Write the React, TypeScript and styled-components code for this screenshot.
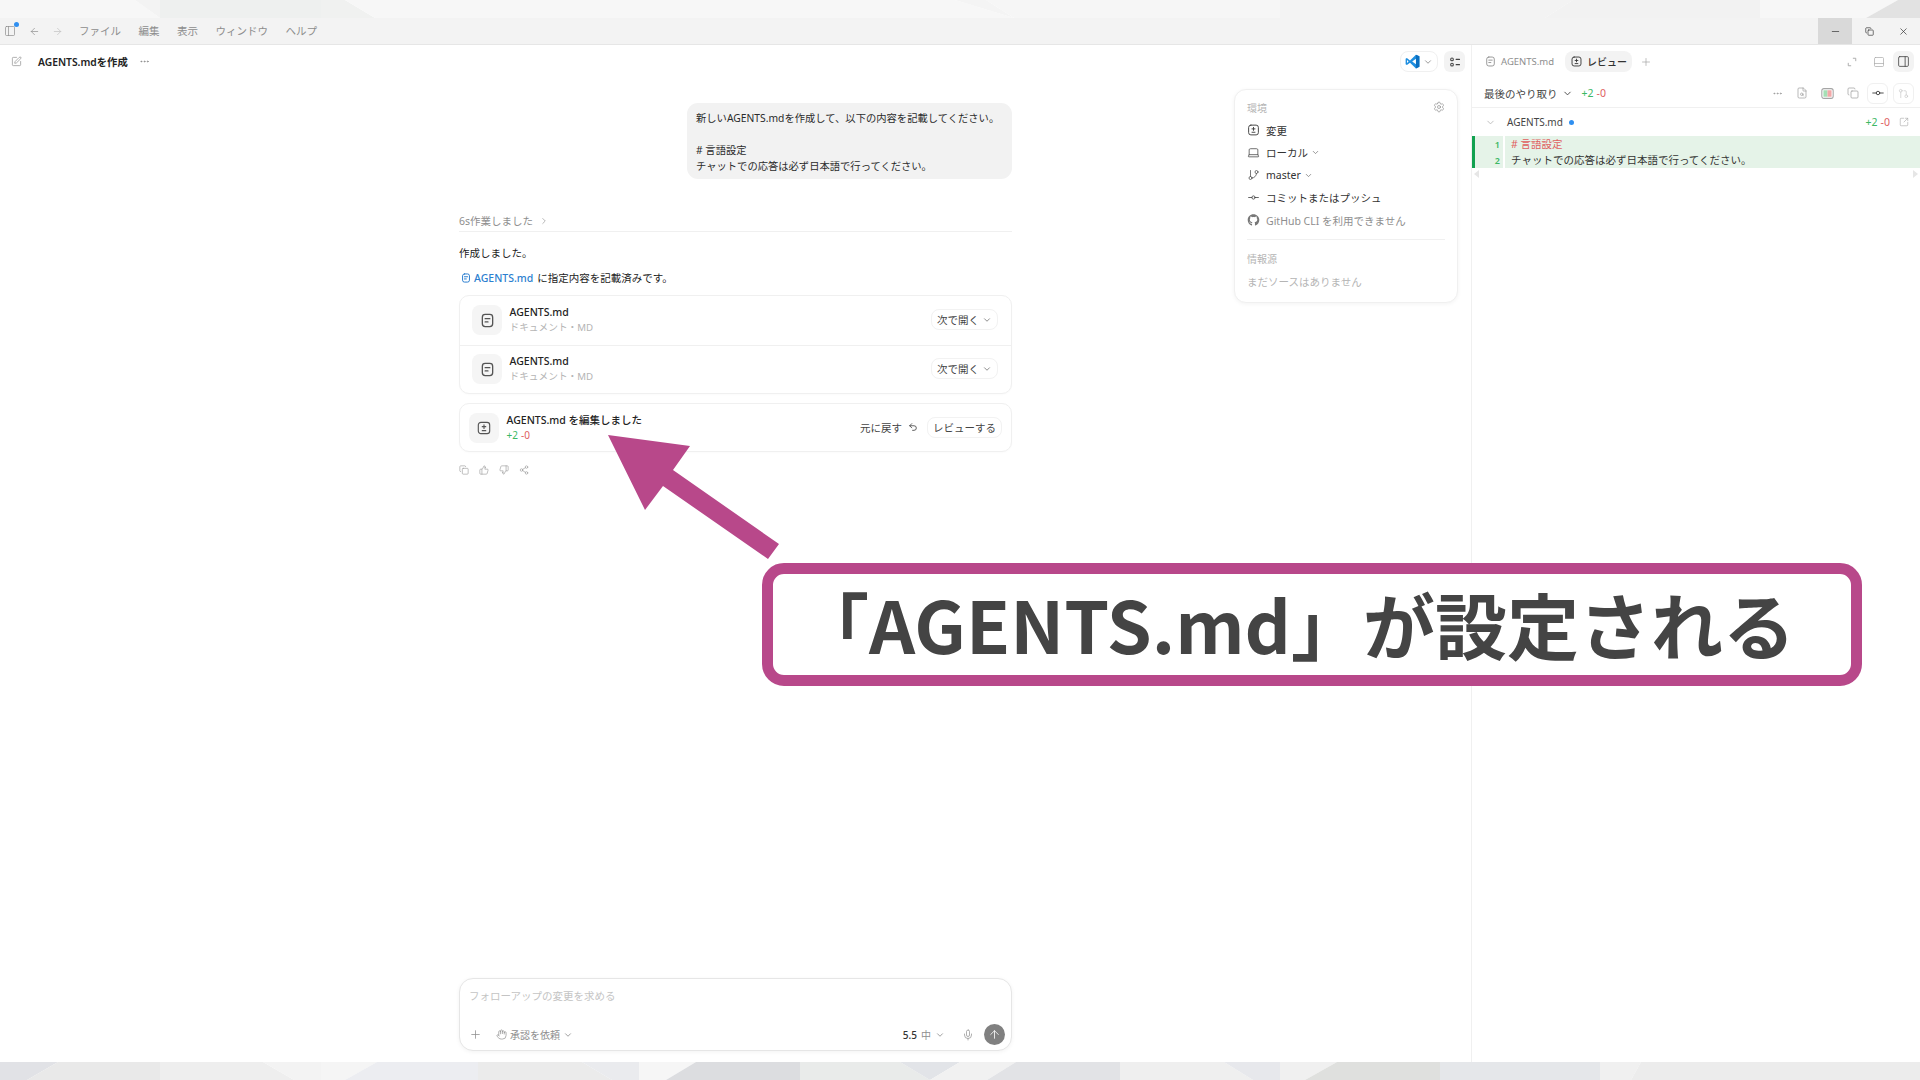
import React from "react";
import styled, { createGlobalStyle } from "styled-components";
import {
    ArrowLeft,
    ArrowRight,
    ArrowUp,
    ChevronDown,
    ChevronRight,
    Copy,
    Ellipsis,
    FileSearch,
    GitBranch,
    GitCommitHorizontal,
    GitPullRequest,
    Hand,
    Laptop,
    Mic,
    Minus,
    PanelBottom,
    PanelLeft,
    PanelRight,
    Plus,
    Settings,
    Share2,
    SquareArrowOutUpRight,
    SquarePen,
    ThumbsDown,
    ThumbsUp,
    Undo2,
    X,
} from "lucide-react";
import { FaGithub } from "react-icons/fa";

const colors = {
    text: "#2f2f2f",
    muted: "#8e8e8e",
    faint: "#b5b5b5",
    line: "#f0f0f0",
    chip: "#f3f3f3",
    green: "#3db864",
    red: "#e0605f",
    accent: "#b8488a",
};

const GlobalStyle = createGlobalStyle`
    html, body {
        margin: 0;
        padding: 0;
        background: #ffffff;
    }
    body {
        font-family: "Noto Sans", "Noto Sans CJK JP", sans-serif;
        font-size: 10.5px;
        color: ${colors.text};
    }
    * {
        box-sizing: border-box;
    }
`;

const Page = styled.div`
    position: relative;
    width: 1920px;
    height: 1080px;
    overflow: hidden;
    display: flex;
    flex-direction: column;
`;

const StripSvg = styled.svg`
    display: block;
    width: 1920px;
    height: 18px;
    flex: none;
`;

const TitleBar = styled.div`
    height: 27px;
    flex: none;
    display: flex;
    align-items: center;
    background: #f3f3f3;
    border-bottom: 1px solid #e6e6e6;
    color: #8d8d8d;
`;

const SidebarToggle = styled.span`
    position: relative;
    display: flex;
    margin-left: 4px;
    width: 13px;
`;

const NoticeDot = styled.span`
    position: absolute;
    top: -3px;
    right: -2px;
    width: 5px;
    height: 5px;
    border-radius: 50%;
    background: #2f8ff0;
`;

const NavArrows = styled.div`
    display: flex;
    gap: 12px;
    margin-left: 12px;
    margin-right: 16px;
`;

const MenuItem = styled.span`
    font-size: 10.5px;
    margin-right: 17.5px;
    line-height: 1;
`;

const WindowControls = styled.div`
    margin-left: auto;
    display: flex;
    height: 100%;
    color: #333;
`;

const WindowButton = styled.span<{ $active?: boolean }>`
    width: 34px;
    display: flex;
    align-items: center;
    justify-content: center;
    background: ${(p) => (p.$active ? "#d9d9d9" : "transparent")};
`;

const Main = styled.div`
    flex: 1;
    min-height: 0;
    display: flex;
    background: #ffffff;
`;

const ChatPane = styled.div`
    width: 1472px;
    flex: none;
    display: flex;
    flex-direction: column;
    border-right: 1px solid ${colors.line};
`;

const ChatHeader = styled.div`
    height: 33px;
    flex: none;
    display: flex;
    align-items: center;
    padding: 0 6px 0 11px;
    color: #8d8d8d;
`;

const ChatTitle = styled.span`
    margin-left: 16px;
    font-size: 10.3px;
    font-weight: 600;
    color: #222;
`;

const TitleMenu = styled.span`
    display: flex;
    margin-left: 11px;
`;

const HeaderRight = styled.div`
    margin-left: auto;
    display: flex;
    align-items: center;
    gap: 6px;
`;

const EditorPicker = styled.div`
    width: 38px;
    height: 21px;
    display: flex;
    align-items: center;
    justify-content: center;
    gap: 3px;
    border: 1px solid ${colors.line};
    border-radius: 8px;
    color: #888;
`;

const IconChip = styled.div<{ $outlined?: boolean }>`
    width: 21px;
    height: 21px;
    display: flex;
    align-items: center;
    justify-content: center;
    border-radius: 6px;
    background: ${(p) => (p.$outlined ? "#fff" : colors.chip)};
    border: ${(p) => (p.$outlined ? `1px solid ${colors.line}` : "none")};
    color: #444;
`;

const ChatBody = styled.div`
    flex: 1;
    min-height: 0;
    display: grid;
    grid-template-columns: 459px 553px 1fr;
`;

const ChatColumn = styled.div`
    grid-column: 2;
    display: flex;
    flex-direction: column;
    padding-bottom: 11px;
`;

const Bubble = styled.div`
    align-self: flex-end;
    width: 325px;
    margin-top: 25px;
    padding: 7px 0 5px 9px;
    background: #f2f2f2;
    border-radius: 11px;
    font-size: 10.3px;
    line-height: 16px;
    color: #2b2b2b;
    white-space: pre;
`;

const WorkRow = styled.div`
    margin-top: 33px;
    height: 20px;
    display: flex;
    align-items: center;
    gap: 6px;
    padding-bottom: 2px;
    color: ${colors.muted};
    border-bottom: 1px solid ${colors.line};
`;

const Paragraph = styled.p<{ $top: number }>`
    margin: ${(p) => p.$top}px 0 0;
    line-height: 16px;
    color: #222;
    display: flex;
    align-items: center;
`;

const FileLink = styled.span`
    display: inline-flex;
    align-items: center;
    gap: 3px;
    margin-right: 4px;
    margin-left: 2px;
    color: #2c7fd0;
    font-weight: 500;
`;

const Card = styled.div<{ $top: number }>`
    margin-top: ${(p) => p.$top}px;
    border: 1px solid ${colors.line};
    border-radius: 10px;
    background: #fff;
    box-shadow: 0 1px 2px rgba(0, 0, 0, 0.02);
`;

const FileRow = styled.div`
    height: 48.5px;
    display: flex;
    align-items: center;
    padding: 0 13px 0 12px;

    & + & {
        border-top: 1px solid ${colors.line};
    }
`;

const EditRow = styled(FileRow)`
    height: 47px;
    padding: 0 9px 0 9px;
`;

const IconBox = styled.div`
    width: 30px;
    height: 30px;
    flex: none;
    display: flex;
    align-items: center;
    justify-content: center;
    border-radius: 8px;
    background: #f5f5f5;
    color: #555;
`;

const RowText = styled.div`
    margin-left: 7.5px;
    display: flex;
    flex-direction: column;
    line-height: 15px;
`;

const RowTitle = styled.span`
    font-weight: 500;
    color: #222;
`;

const RowSub = styled.span`
    font-size: 9.7px;
    color: ${colors.faint};
`;

const RowActions = styled.div`
    margin-left: auto;
    padding-bottom: 1px;
    display: flex;
    align-items: center;
    gap: 9px;
`;

const GhostButton = styled.span`
    height: 21px;
    display: inline-flex;
    align-items: center;
    gap: 3px;
    padding: 0 5px;
    border: 1px solid #f2f2f2;
    border-radius: 8px;
    color: #444;
    background: #fff;
`;

const UndoLabel = styled.span`
    display: inline-flex;
    align-items: center;
    gap: 6px;
    color: #444;
`;

const Stat = styled.span<{ $small?: boolean }>`
    display: inline-flex;
    gap: 3px;
    font-size: ${(p) => (p.$small ? "10px" : "10.5px")};
    line-height: 15px;
    color: ${colors.green};

    & > span {
        color: ${colors.red};
    }
`;

const Reactions = styled.div`
    margin-top: 10px;
    height: 16px;
    display: flex;
    align-items: center;
    gap: 10px;
    color: #9a9a9a;
`;

const Composer = styled.div`
    margin-top: auto;
    height: 73px;
    display: flex;
    flex-direction: column;
    justify-content: space-between;
    padding: 9px 6px 5px 9px;
    border: 1px solid #e6e6e6;
    border-radius: 14px;
    background: #fff;
    box-shadow: 0 1px 4px rgba(0, 0, 0, 0.05);
`;

const Placeholder = styled.span`
    line-height: 16px;
    color: #c4c4c4;
`;

const ComposerBar = styled.div`
    display: flex;
    align-items: center;
    color: ${colors.muted};
`;

const ApprovalPicker = styled.span`
    margin-left: 14px;
    display: inline-flex;
    align-items: center;
    gap: 3px;
    font-size: 10px;
`;

const ModelPicker = styled.span`
    margin-left: auto;
    display: inline-flex;
    align-items: center;
    gap: 4px;
    font-size: 10px;
`;

const ModelName = styled.span`
    color: #333;
    font-weight: 500;
`;

const MicSlot = styled.span`
    display: flex;
    margin: 0 10px 0 17px;
`;

const SendButton = styled.span`
    width: 21px;
    height: 21px;
    border-radius: 50%;
    display: flex;
    align-items: center;
    justify-content: center;
    background: #808080;
    color: #fff;
`;

const EnvCard = styled.aside`
    grid-column: 3;
    justify-self: end;
    align-self: start;
    width: 224px;
    height: 214px;
    margin: 11px 13px 0 0;
    padding: 9px 12px 0;
    border: 1px solid ${colors.line};
    border-radius: 12px;
    background: #fff;
    box-shadow: 0 1px 4px rgba(0, 0, 0, 0.05);
`;

const EnvHead = styled.div`
    height: 16px;
    display: flex;
    align-items: center;
    justify-content: space-between;
    font-size: 10px;
    color: ${colors.faint};
`;

const EnvList = styled.div`
    margin-top: 4px;
    display: flex;
    flex-direction: column;
`;

const EnvRow = styled.div<{ $muted?: boolean }>`
    height: 22.5px;
    display: flex;
    align-items: center;
    gap: 7px;
    color: ${(p) => (p.$muted ? colors.muted : "#333")};

    & > svg:first-child {
        flex: none;
        width: 13px;
        margin-left: -0.5px;
        margin-right: -0.5px;
        color: ${(p) => (p.$muted ? "#777" : "#444")};
    }

    & > svg:last-child:not(:first-child) {
        margin-left: -4px;
    }
`;

const EnvDivider = styled.div`
    margin: 7px 0 11px;
    border-top: 1px solid ${colors.line};
`;

const EnvEmpty = styled.div`
    margin-top: 7px;
    line-height: 16px;
    color: ${colors.faint};
`;

const ReviewPane = styled.div`
    flex: 1;
    min-width: 0;
    display: flex;
    flex-direction: column;
`;

const TabBar = styled.div`
    height: 33px;
    flex: none;
    display: flex;
    align-items: center;
    padding: 0 6px 0 13px;
`;

const Tab = styled.span<{ $active?: boolean }>`
    height: 21px;
    display: inline-flex;
    align-items: center;
    gap: 5px;
    padding: ${(p) => (p.$active ? "0 5px 0 6px" : "0")};
    margin-left: ${(p) => (p.$active ? "11px" : "0")};
    border-radius: 8px;
    background: ${(p) => (p.$active ? colors.chip : "transparent")};
    color: ${(p) => (p.$active ? "#333" : colors.muted)};
    font-size: ${(p) => (p.$active ? "10px" : "9.5px")};
    font-weight: ${(p) => (p.$active ? 500 : 400)};
`;

const AddTab = styled.span`
    display: flex;
    margin-left: 8px;
    color: #a5a5a5;
`;

const TabTools = styled.div`
    margin-left: auto;
    display: flex;
    align-items: center;
    gap: 8px;
    color: #a9a9a9;
`;

const ExpandSlot = styled.span`
    display: flex;
    margin-right: 8px;
`;

const ReviewBar = styled.div`
    height: 30px;
    flex: none;
    display: flex;
    align-items: center;
    padding: 1px 6px 0 12px;
    border-bottom: 1px solid ${colors.line};
`;

const ScopePicker = styled.span`
    display: inline-flex;
    align-items: center;
    gap: 4px;
    margin-right: 9px;
    color: #444;
`;

const ReviewTools = styled.div`
    margin-left: auto;
    display: flex;
    align-items: center;
    gap: 13px;
    color: #9c9c9c;
`;

const ChipGroup = styled.div`
    display: flex;
    gap: 5px;
    margin-left: -5px;
`;

const FileHead = styled.div`
    height: 28px;
    flex: none;
    display: flex;
    align-items: center;
    padding: 0 11px 0 13px;
    color: #bbb;
`;

const FileName = styled.span`
    margin-left: 11px;
    font-size: 10px;
    color: #444;
`;

const ChangedDot = styled.span`
    width: 5px;
    height: 5px;
    margin-left: 6px;
    border-radius: 50%;
    background: #2f8ff0;
`;

const FileStats = styled.div`
    margin-left: auto;
    display: flex;
    align-items: center;
    gap: 9px;
`;

const DiffBlock = styled.div`
    flex: none;
    border-left: 3px solid #12a150;
`;

const DiffLine = styled.div`
    height: 16px;
    display: flex;
    align-items: center;
    background: #e5f3e8;
`;

const LineNumber = styled.span`
    width: 30px;
    height: 100%;
    padding-right: 3px;
    display: flex;
    align-items: center;
    justify-content: flex-end;
    border-right: 2px solid #fff;
    color: ${colors.green};
    font-size: 9px;
    font-weight: 600;
`;

const LineCode = styled.span<{ $heading?: boolean }>`
    margin-left: 6px;
    padding-bottom: 2px;
    color: ${(p) => (p.$heading ? colors.red : "#333")};
`;

const ScrollTrack = styled.div`
    height: 12px;
    flex: none;
    display: flex;
    align-items: center;
    justify-content: space-between;
    padding: 0 2px;
`;

const ScrollArrow = styled.span<{ $right?: boolean }>`
    width: 0;
    height: 0;
    border-top: 4px solid transparent;
    border-bottom: 4px solid transparent;
    border-${(p) => (p.$right ? "left" : "right")}: 5px solid #e6e6e6;
`;

const Callout = styled.div`
    position: absolute;
    left: 762px;
    top: 563px;
    width: 1100px;
    height: 123px;
    display: flex;
    align-items: center;
    justify-content: center;
    padding: 0 32px 4px 0;
    border: 11px solid ${colors.accent};
    border-radius: 22px;
    background: #fff;
    color: #444;
    font-family: "Noto Sans CJK JP", sans-serif;
    font-size: 72px;
    font-weight: 700;
    white-space: nowrap;
`;

const ArrowSvg = styled.svg`
    position: absolute;
    left: 600px;
    top: 430px;
    width: 190px;
    height: 135px;
`;

// wallpaper slices along the top and bottom edges, in screen px
const bottomSlices: [number, number, number, number, string][] = [
    [0, 58, 27, 0, "#e1e2e6"],
    [58, 160, 160, 27, "#e9e9e9"],
    [160, 263, 294, 160, "#eeeeee"],
    [263, 321, 321, 294, "#f3f3f3"],
    [321, 377, 345, 321, "#f5f5f5"],
    [377, 478, 478, 345, "#ecedf1"],
    [478, 582, 612, 478, "#ebebeb"],
    [582, 639, 639, 612, "#eaebee"],
    [639, 696, 666, 639, "#f6f6f6"],
    [696, 800, 800, 666, "#dcdde0"],
    [800, 900, 930, 800, "#e9ebea"],
    [900, 960, 930, 930, "#e2e4e8"],
    [960, 1016, 987, 930, "#f1f1f1"],
    [1016, 1120, 1120, 987, "#e2e3e6"],
    [1120, 1224, 1253, 1120, "#efefef"],
    [1224, 1280, 1280, 1253, "#e7e8ec"],
    [1280, 1337, 1305, 1280, "#f0f0f0"],
    [1337, 1440, 1440, 1305, "#dfe0de"],
    [1440, 1600, 1600, 1440, "#e5e7ea"],
    [1600, 1641, 1631, 1600, "#f0f0f0"],
    [1641, 1920, 1920, 1631, "#ececec"],
];

const topSlices: [number, number, number, number, string][] = [
    [0, 135, 160, 0, "#f7f7f7"],
    [135, 160, 160, 160, "#f3f3f3"],
    [160, 321, 321, 160, "#eef0ef"],
    [321, 345, 375, 321, "#f0f1f0"],
    [345, 955, 1014, 375, "#f7f7f7"],
    [955, 986, 1014, 1014, "#f4f4f4"],
    [986, 1280, 1280, 1014, "#f6f6f6"],
    [1280, 1573, 1545, 1280, "#f3f3f3"],
    [1573, 1760, 1760, 1545, "#f2f2f2"],
    [1760, 1898, 1866, 1760, "#f7f7f7"],
    [1898, 1920, 1920, 1866, "#e2e2e2"],
];

function Wallpaper({ slices }: { slices: [number, number, number, number, string][] }) {
    return (
        <StripSvg viewBox="0 0 1920 18" preserveAspectRatio="none">
            {slices.map(([a, b, c, d, fill]) => (
                <polygon key={`${a}-${b}`} points={`${a},0 ${b},0 ${c},18 ${d},18`} fill={fill} />
            ))}
        </StripSvg>
    );
}

function VscodeLogo() {
    return (
        <svg width="15" height="15" viewBox="0 0 24 24">
            <path d="M17.5 1 23 3.7v16.6L17.5 23 8 13.8l-5 3.9L1 16.5v-9l2-1.2 5 3.9z" fill="#1f8fe0" />
            <path d="M17.5 1 23 3.7v16.6L17.5 23z" fill="#0b6fc0" />
            <path d="M17.5 7.5 11.5 12l6 4.5z" fill="#fff" />
            <path d="M3.2 9.5 5.8 12l-2.6 2.5z" fill="#fff" />
        </svg>
    );
}

function DocIcon({ size = 12, weight = 1.3 }: { size?: number; weight?: number }) {
    return (
        <svg width={size} height={size} viewBox="0 0 16 16" fill="none" stroke="currentColor" strokeWidth={weight} strokeLinecap="round">
            <rect x="2.5" y="1.5" width="11" height="13" rx="3" />
            <path d="M5.5 6h5M5.5 9.5h3" />
        </svg>
    );
}

function DiffBox({ size = 12, minus = true }: { size?: number; minus?: boolean }) {
    return (
        <svg width={size} height={size} viewBox="0 0 16 16" fill="none" stroke="currentColor" strokeWidth="1.3" strokeLinecap="round">
            <rect x="1.5" y="1.5" width="13" height="13" rx="3" />
            <path d="M8 4.5v4M6 6.5h4" />
            {minus && <path d="M6 11h4" />}
        </svg>
    );
}

function TaskList() {
    return (
        <svg width="12" height="12" viewBox="0 0 16 16" fill="none" stroke="currentColor" strokeWidth="1.4" strokeLinecap="round">
            <circle cx="4" cy="4.5" r="1.8" />
            <circle cx="4" cy="11.5" r="1.8" />
            <path d="M9.5 4.5H14M9.5 11.5H14" />
        </svg>
    );
}

function CornerExpand() {
    return (
        <svg width="10" height="10" viewBox="0 0 16 16" fill="none" stroke="currentColor" strokeWidth="1.5" strokeLinecap="round">
            <path d="M10 2h4v4M6 14H2v-4" />
        </svg>
    );
}

function DiffColors() {
    return (
        <svg width="13" height="13" viewBox="0 0 16 16" fill="none">
            <rect x="1" y="2" width="14" height="12" rx="2.5" stroke="#a5a5a5" strokeWidth="1.3" />
            <rect x="3" y="4" width="5" height="8" fill="#a5dfb5" />
            <rect x="8" y="4" width="5" height="8" fill="#f2a8a8" />
        </svg>
    );
}

function FileCard() {
    return (
        <FileRow>
            <IconBox>
                <DocIcon size={15} weight={1.4} />
            </IconBox>
            <RowText>
                <RowTitle>AGENTS.md</RowTitle>
                <RowSub>ドキュメント・MD</RowSub>
            </RowText>
            <RowActions>
                <GhostButton>
                    次で開く
                    <ChevronDown size={10} color="#777" />
                </GhostButton>
            </RowActions>
        </FileRow>
    );
}

function App() {
    return (
        <Page>
            <GlobalStyle />
            <Wallpaper slices={topSlices} />

            <TitleBar>
                <SidebarToggle>
                    <PanelLeft size={12} strokeWidth={1.4} />
                    <NoticeDot />
                </SidebarToggle>
                <NavArrows>
                    <ArrowLeft size={11} strokeWidth={1.5} />
                    <ArrowRight size={11} strokeWidth={1.5} color="#c0c0c0" />
                </NavArrows>
                <MenuItem>ファイル</MenuItem>
                <MenuItem>編集</MenuItem>
                <MenuItem>表示</MenuItem>
                <MenuItem>ウィンドウ</MenuItem>
                <MenuItem>ヘルプ</MenuItem>
                <WindowControls>
                    <WindowButton $active>
                        <Minus size={11} strokeWidth={1.5} />
                    </WindowButton>
                    <WindowButton>
                        <Copy size={9} strokeWidth={1.8} />
                    </WindowButton>
                    <WindowButton>
                        <X size={11} strokeWidth={1.5} />
                    </WindowButton>
                </WindowControls>
            </TitleBar>

            <Main>
                <ChatPane>
                    <ChatHeader>
                        <SquarePen size={11} strokeWidth={1.5} />
                        <ChatTitle>AGENTS.mdを作成</ChatTitle>
                        <TitleMenu>
                            <Ellipsis size={11} />
                        </TitleMenu>
                        <HeaderRight>
                            <EditorPicker>
                                <VscodeLogo />
                                <ChevronDown size={10} />
                            </EditorPicker>
                            <IconChip>
                                <TaskList />
                            </IconChip>
                        </HeaderRight>
                    </ChatHeader>

                    <ChatBody>
                        <ChatColumn>
                            <Bubble>
                                {"新しいAGENTS.mdを作成して、以下の内容を記載してください。\n\n# 言語設定\nチャットでの応答は必ず日本語で行ってください。"}
                            </Bubble>
                            <WorkRow>
                                6s作業しました
                                <ChevronRight size={10} color="#aaa" />
                            </WorkRow>
                            <Paragraph $top={13}>作成しました。</Paragraph>
                            <Paragraph $top={9}>
                                <FileLink>
                                    <DocIcon size={10} weight={1.6} />
                                    AGENTS.md
                                </FileLink>
                                に指定内容を記載済みです。
                            </Paragraph>

                            <Card $top={9}>
                                <FileCard />
                                <FileCard />
                            </Card>

                            <Card $top={9}>
                                <EditRow>
                                    <IconBox>
                                        <DiffBox size={14} />
                                    </IconBox>
                                    <RowText>
                                        <RowTitle>AGENTS.md を編集しました</RowTitle>
                                        <Stat $small>
                                            +2 <span>-0</span>
                                        </Stat>
                                    </RowText>
                                    <RowActions>
                                        <UndoLabel>
                                            元に戻す
                                            <Undo2 size={10} />
                                        </UndoLabel>
                                        <GhostButton>レビューする</GhostButton>
                                    </RowActions>
                                </EditRow>
                            </Card>

                            <Reactions>
                                <Copy size={10} strokeWidth={1.5} />
                                <ThumbsUp size={10} strokeWidth={1.5} />
                                <ThumbsDown size={10} strokeWidth={1.5} />
                                <Share2 size={10} strokeWidth={1.5} />
                            </Reactions>

                            <Composer>
                                <Placeholder>フォローアップの変更を求める</Placeholder>
                                <ComposerBar>
                                    <Plus size={13} strokeWidth={1.4} />
                                    <ApprovalPicker>
                                        <Hand size={11} strokeWidth={1.5} />
                                        承認を依頼
                                        <ChevronDown size={10} />
                                    </ApprovalPicker>
                                    <ModelPicker>
                                        <ModelName>5.5</ModelName>中
                                        <ChevronDown size={10} />
                                    </ModelPicker>
                                    <MicSlot>
                                        <Mic size={12} strokeWidth={1.4} />
                                    </MicSlot>
                                    <SendButton>
                                        <ArrowUp size={13} strokeWidth={1.5} />
                                    </SendButton>
                                </ComposerBar>
                            </Composer>
                        </ChatColumn>

                        <EnvCard>
                            <EnvHead>
                                環境
                                <Settings size={12} strokeWidth={1.3} color="#888" />
                            </EnvHead>
                            <EnvList>
                                <EnvRow>
                                    <DiffBox />
                                    変更
                                </EnvRow>
                                <EnvRow>
                                    <Laptop size={13} strokeWidth={1.4} />
                                    ローカル
                                    <ChevronDown size={9} color="#777" />
                                </EnvRow>
                                <EnvRow>
                                    <GitBranch size={12} strokeWidth={1.4} />
                                    master
                                    <ChevronDown size={9} color="#777" />
                                </EnvRow>
                                <EnvRow>
                                    <GitCommitHorizontal size={13} strokeWidth={1.5} />
                                    コミットまたはプッシュ
                                </EnvRow>
                                <EnvRow $muted>
                                    <FaGithub size={12} />
                                    GitHub CLI を利用できません
                                </EnvRow>
                            </EnvList>
                            <EnvDivider />
                            <EnvHead>情報源</EnvHead>
                            <EnvEmpty>まだソースはありません</EnvEmpty>
                        </EnvCard>
                    </ChatBody>
                </ChatPane>

                <ReviewPane>
                    <TabBar>
                        <Tab>
                            <DocIcon size={11} />
                            AGENTS.md
                        </Tab>
                        <Tab $active>
                            <DiffBox size={11} />
                            レビュー
                        </Tab>
                        <AddTab>
                            <Plus size={12} strokeWidth={1.4} />
                        </AddTab>
                        <TabTools>
                            <ExpandSlot>
                                <CornerExpand />
                            </ExpandSlot>
                            <PanelBottom size={12} strokeWidth={1.4} />
                            <IconChip>
                                <PanelRight size={13} strokeWidth={1.5} />
                            </IconChip>
                        </TabTools>
                    </TabBar>

                    <ReviewBar>
                        <ScopePicker>
                            最後のやり取り
                            <ChevronDown size={11} />
                        </ScopePicker>
                        <Stat>
                            +2 <span>-0</span>
                        </Stat>
                        <ReviewTools>
                            <Ellipsis size={11} />
                            <FileSearch size={12} strokeWidth={1.4} />
                            <DiffColors />
                            <Copy size={12} strokeWidth={1.4} />
                            <ChipGroup>
                                <IconChip $outlined>
                                    <GitCommitHorizontal size={14} strokeWidth={1.6} />
                                </IconChip>
                                <IconChip $outlined>
                                    <GitPullRequest size={11} strokeWidth={1.4} color="#c5c5c5" />
                                </IconChip>
                            </ChipGroup>
                        </ReviewTools>
                    </ReviewBar>

                    <FileHead>
                        <ChevronDown size={11} />
                        <FileName>AGENTS.md</FileName>
                        <ChangedDot />
                        <FileStats>
                            <Stat>
                                +2 <span>-0</span>
                            </Stat>
                            <SquareArrowOutUpRight size={10} strokeWidth={1.5} color="#aaa" />
                        </FileStats>
                    </FileHead>

                    <DiffBlock>
                        <DiffLine>
                            <LineNumber>1</LineNumber>
                            <LineCode $heading># 言語設定</LineCode>
                        </DiffLine>
                        <DiffLine>
                            <LineNumber>2</LineNumber>
                            <LineCode>チャットでの応答は必ず日本語で行ってください。</LineCode>
                        </DiffLine>
                    </DiffBlock>
                    <ScrollTrack>
                        <ScrollArrow />
                        <ScrollArrow $right />
                    </ScrollTrack>
                </ReviewPane>
            </Main>

            <Wallpaper slices={bottomSlices} />

            <ArrowSvg viewBox="600 430 190 135">
                <polygon points="608,435 690,446 673,470 779,544 768,559 663,486 645,510" fill={colors.accent} />
            </ArrowSvg>
            <Callout>「AGENTS.md」が設定される</Callout>
        </Page>
    );
}

export default App;
